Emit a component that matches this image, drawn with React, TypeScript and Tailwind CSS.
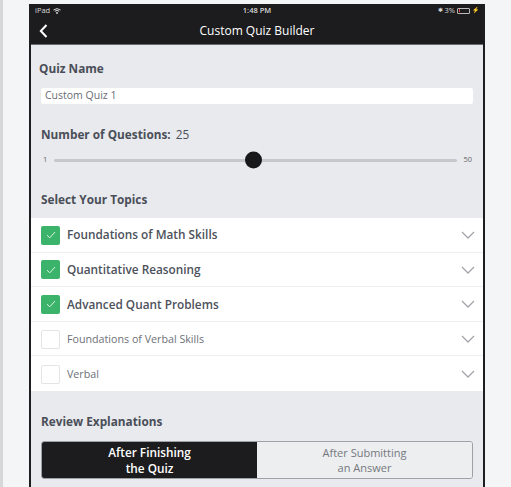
import React from "react";

const Check = () => (
  <svg width="10" height="8" viewBox="0 0 10 8" fill="none">
    <path d="M1 4.2 L3.8 6.8 L9 1" stroke="#d9f3e2" strokeWidth="1" />
  </svg>
);

const Chevron = () => (
  <svg width="14" height="8" viewBox="0 0 14 8" fill="none">
    <path d="M1 1 L7 7 L13 1" stroke="#a3a5ab" strokeWidth="1.3" />
  </svg>
);

const topics = [
  { label: "Foundations of Math Skills", on: true },
  { label: "Quantitative Reasoning", on: true },
  { label: "Advanced Quant Problems", on: true },
  { label: "Foundations of Verbal Skills", on: false },
  { label: "Verbal", on: false },
];

export default function App() {
  return (
    <div
      className="w-[511px] h-[487px] overflow-hidden bg-[#f4f5f7] flex"
      style={{ fontFamily: '"Open Sans", "Noto Sans", sans-serif' }}
    >
      <div className="w-[3px] h-full bg-[#d6d7d9]" />
      <div className="ml-[26px] mt-[4px] w-[456px] flex flex-col border-x-2 border-[#1e1e20] bg-[#e8eaed]">
        {/* header */}
        <div className="bg-[#1c1c1e] border-b border-[#6b6b6e]">
          <div className="h-[13px] flex items-center justify-between px-[4px] text-[7.5px] text-[#d8d8d8] relative">
            <div className="flex items-center gap-[3px]">
              <span>iPad</span>
              <svg width="8" height="6" viewBox="0 0 8 6">
                <path d="M0.5 2 Q4 -0.8 7.5 2" stroke="#ddd" strokeWidth="1" fill="none" />
                <path d="M1.8 3.3 Q4 1.5 6.2 3.3" stroke="#ddd" strokeWidth="1" fill="none" />
                <circle cx="4" cy="5" r="0.9" fill="#ddd" />
              </svg>
            </div>
            <span className="absolute left-1/2 -translate-x-1/2 font-semibold">1:48 PM</span>
            <div className="flex items-center gap-[2px]">
              <span className="text-[6px]">✱</span>
              <span>3%</span>
              <div className="w-[13px] h-[6px] border border-[#bbb] rounded-[1px] flex items-center p-[0.5px]">
                <div className="w-[1px] h-full bg-[#e04545]" />
              </div>
              <span className="text-[6px]">⚡</span>
            </div>
          </div>
          <div className="h-[27px] flex items-center relative">
            <svg className="absolute left-[8px]" width="9" height="14" viewBox="0 0 9 14" fill="none">
              <path d="M7.5 1 L1.8 7 L7.5 13" stroke="#fff" strokeWidth="2" />
            </svg>
            <div className="w-full text-center text-white text-[12px]">Custom Quiz Builder</div>
          </div>
        </div>

        {/* content */}
        <div className="px-[10px] pt-[14px]">
          <div className="h-[18px] leading-[18px] text-[11.8px] font-bold text-[#4a4e58] -ml-[2px]">Quiz Name</div>
          <div className="mt-[11px] h-[16px] bg-white rounded-[2px] flex items-center pl-[4px] text-[10.5px] text-[#6a6d74]">
            Custom Quiz 1
          </div>
          <div className="mt-[21px] h-[18px] leading-[18px] text-[11.8px] text-[#4a4e58] flex items-center">
            <span className="font-bold">Number of Questions:</span>
            <span className="ml-[5px]">25</span>
          </div>
          <div className="mt-[9px] h-[16px] flex items-center">
            <span className="text-[7.5px] text-[#666] w-[13px] pl-[2px]">1</span>
            <div className="flex-1 relative h-[3px] bg-[#c6c8cc] rounded-full">
              <div className="absolute w-[17px] h-[17px] rounded-full bg-[#18181a] top-1/2 -translate-y-1/2 left-[191px]" />
            </div>
            <span className="text-[7.5px] text-[#666] pl-[6px] pr-[1px]">50</span>
          </div>
          <div className="mt-[22px] mb-[10px] h-[18px] leading-[18px] text-[11.8px] font-bold text-[#4a4e58]">
            Select Your Topics
          </div>
        </div>

        <div className="bg-white">
          {topics.map((t, i) => (
            <div
              key={t.label}
              className={`h-[34.6px] pt-[1px] flex items-center pl-[10px] pr-[8px] ${i < topics.length - 1 ? "border-b border-[#eeeff1]" : ""}`}
            >
              {t.on ? (
                <div className="w-[19px] h-[19px] rounded-[2px] bg-[#3bb36a] flex items-center justify-center">
                  <Check />
                </div>
              ) : (
                <div className="w-[19px] h-[19px] rounded-[2px] bg-white border border-[#e3e4e6]" />
              )}
              <span
                className={
                  t.on
                    ? "ml-[7px] text-[11.8px] font-semibold text-[#4d515b]"
                    : "ml-[7px] text-[10.7px] text-[#6e7178]"
                }
              >
                {t.label}
              </span>
              <span className="ml-auto">
                <Chevron />
              </span>
            </div>
          ))}
        </div>

        <div className="px-[10px] pt-[21px] flex-1">
          <div className="h-[18px] leading-[18px] text-[11.8px] font-bold text-[#4a4e58]">Review Explanations</div>
          <div className="mt-[11px] h-[38px] flex rounded-[3px] overflow-hidden border border-[#9da0a5]">
            <div className="w-1/2 bg-[#1c1c1e] text-white text-[11.8px] font-semibold flex flex-col items-center justify-center text-center">
              <div className="leading-[16px]">After Finishing</div>
              <div className="leading-[16px]">the Quiz</div>
            </div>
            <div className="w-1/2 bg-[#eceef0] text-[#75787e] text-[11px] flex flex-col items-center justify-center text-center">
              <div className="leading-[15px]">After Submitting</div>
              <div className="leading-[15px]">an Answer</div>
            </div>
          </div>
        </div>
      </div>
    </div>
  );
}
